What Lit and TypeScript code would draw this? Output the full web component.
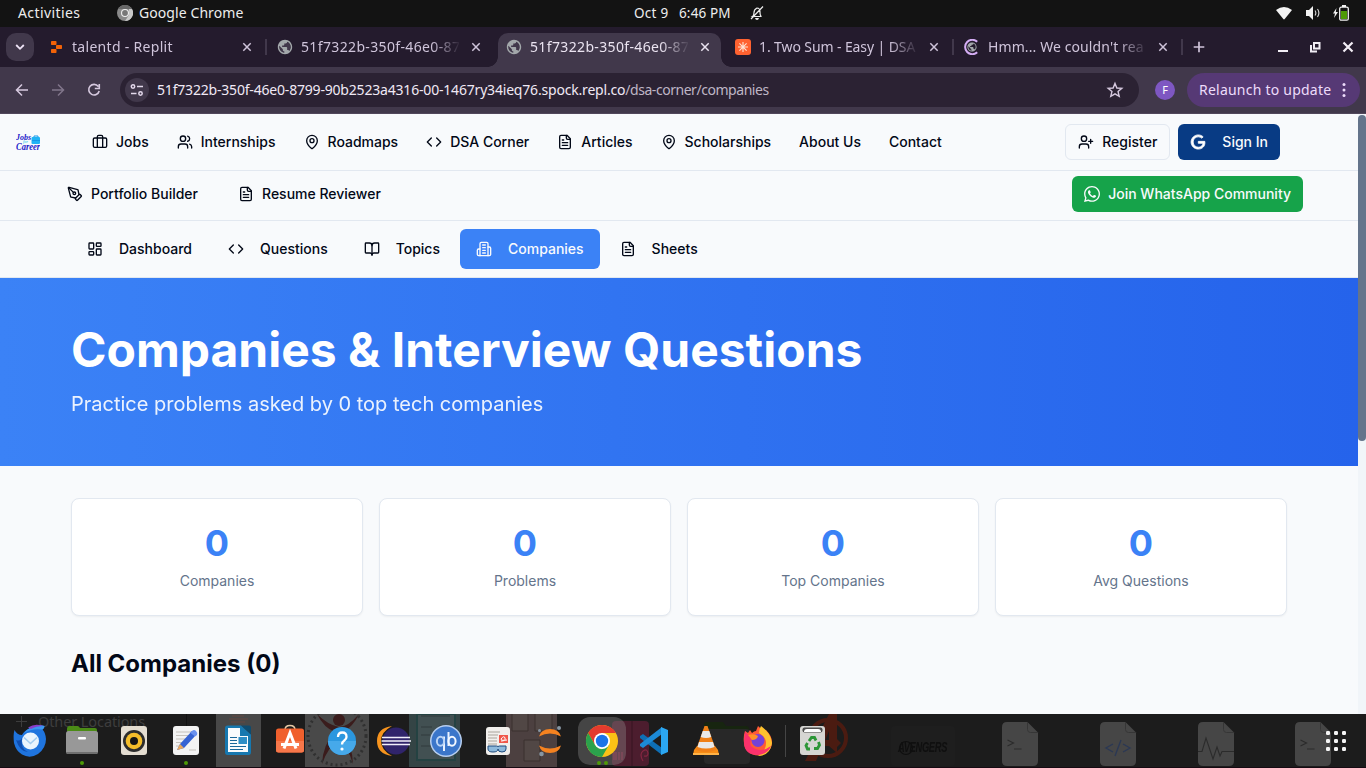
import { LitElement, html, svg, css, TemplateResult, SVGTemplateResult } from "lit";
import { customElement } from "lit/decorators.js";
import { classMap } from "lit/directives/class-map.js";

type Art = SVGTemplateResult;

/* ---------- line icons, 24-unit grid ---------- */
const line: Record<string, Art> = {
  jobs: svg`<path d="M16 20V4a2 2 0 0 0-2-2h-4a2 2 0 0 0-2 2v16"/><rect width="20" height="14" x="2" y="6" rx="2"/>`,
  users: svg`<path d="M16 21v-2a4 4 0 0 0-4-4H6a4 4 0 0 0-4 4v2"/><circle cx="9" cy="7" r="4"/><path d="M22 21v-2a4 4 0 0 0-3-3.87"/><path d="M16 3.13a4 4 0 0 1 0 7.75"/>`,
  pin: svg`<path d="M20 10c0 4.993-5.539 10.193-7.399 11.799a1 1 0 0 1-1.202 0C9.539 20.193 4 14.993 4 10a8 8 0 0 1 16 0"/><circle cx="12" cy="10" r="3"/>`,
  code: svg`<path d="m16 18 6-6-6-6"/><path d="m8 6-6 6 6 6"/>`,
  file: svg`<path d="M15 2H6a2 2 0 0 0-2 2v16a2 2 0 0 0 2 2h12a2 2 0 0 0 2-2V7Z"/><path d="M14 2v4a2 2 0 0 0 2 2h4"/><path d="M10 9H8"/><path d="M16 13H8"/><path d="M16 17H8"/>`,
  pen: svg`<path d="M15.707 21.293a1 1 0 0 1-1.414 0l-1.586-1.586a1 1 0 0 1 0-1.414l5.586-5.586a1 1 0 0 1 1.414 0l1.586 1.586a1 1 0 0 1 0 1.414z"/><path d="m18 13-1.375-6.874a1 1 0 0 0-.746-.776L3.235 2.028a1 1 0 0 0-1.207 1.207L5.35 15.879a1 1 0 0 0 .776.746L13 18"/><path d="m2.3 2.3 7.286 7.286"/><circle cx="11" cy="11" r="2"/>`,
  userPlus: svg`<path d="M16 21v-2a4 4 0 0 0-4-4H6a4 4 0 0 0-4 4v2"/><circle cx="9" cy="7" r="4"/><path d="M19 8v6M22 11h-6"/>`,
  dashboard: svg`<rect width="7" height="9" x="3" y="3" rx="1"/><rect width="7" height="5" x="14" y="3" rx="1"/><rect width="7" height="9" x="14" y="12" rx="1"/><rect width="7" height="5" x="3" y="16" rx="1"/>`,
  book: svg`<path d="M12 7v14"/><path d="M3 18a1 1 0 0 1-1-1V4a1 1 0 0 1 1-1h5a4 4 0 0 1 4 4 4 4 0 0 1 4-4h5a1 1 0 0 1 1 1v13a1 1 0 0 1-1 1h-6a3 3 0 0 0-3 3 3 3 0 0 0-3-3z"/>`,
  building: svg`<path d="M6 22V4a2 2 0 0 1 2-2h8a2 2 0 0 1 2 2v18Z"/><path d="M6 12H4a2 2 0 0 0-2 2v6a2 2 0 0 0 2 2h2"/><path d="M18 9h2a2 2 0 0 1 2 2v9a2 2 0 0 1-2 2h-2"/><path d="M10 6h4M10 10h4M10 14h4M10 18h4"/>`,
};
const icon = (name: string) =>
  html`<svg class="line" width="16" height="16" viewBox="0 0 24 24">${line[name]}</svg>`;

const pic = (w: number, h: number, box: string, art: Art) =>
  html`<svg width=${w} height=${h} viewBox=${box}>${art}</svg>`;

const globePath =
  "M12 2C6.48 2 2 6.48 2 12s4.48 10 10 10 10-4.48 10-10S17.52 2 12 2zm-1 17.93c-3.95-.49-7-3.85-7-7.93 0-.62.08-1.21.21-1.79L9 15v1c0 1.1.9 2 2 2v1.93zm6.9-2.54c-.26-.81-1-1.39-1.9-1.39h-1v-3c0-.55-.45-1-1-1H8v-2h2c.55 0 1-.45 1-1V7h2c1.1 0 2-.9 2-2v-.41c2.93 1.19 5 4.06 5 7.41 0 2.08-.8 3.97-2.1 5.39z";

/* ---------- tab favicons, 16-unit grid ---------- */
const globe = svg`<circle cx="8" cy="8" r="5.5" fill="#41384b"/><path transform="translate(-.64 -.64) scale(.72)" fill="#a3a8ab" d=${globePath}/>`;
const fav: Record<string, Art> = {
  replit: svg`<g fill="#f26207"><rect x="3" y="2" width="5.5" height="4" rx=".7"/><rect x="8" y="6" width="6" height="4" rx=".7"/><rect x="3" y="10" width="5.5" height="4" rx=".7"/></g>`,
  globe,
  burst: svg`<rect width="16" height="16" rx="3" fill="#ff6230"/><path d="M8 3v10M3 8h10M4.4 4.4l7.2 7.2M11.6 4.400l-7.200 7.200" stroke="#ffe3d4" stroke-width="1.1"/>`,
  loading: svg`<path transform="translate(2.480 2.480) scale(.46)" fill="#a3a8ab" d=${globePath}/><path d="M13.2 2.700A7.200 7.200 0 1 0 13.200 13.300" fill="none" stroke="#d5aef5" stroke-width="2"/>`,
};

/* ---------- dock applications, 34-unit grid ---------- */
const dock: { art: Art; dots?: number; on?: boolean }[] = [
  { art: svg`<path d="M1.500 7Q0 12 1 20 3 28 9 31.500 17 36 25 31 33 25 33 16 32.500 9.500 29.500 6.500 31.500 5 31.500 3 24 1 17 5 11 8 9 12 4 12 1.500 7z" fill="#1f74de"/><path d="M31.500 3Q24 1 17 5q-4 2-6 5 8-5 18.500-3.500Q31.500 5 31.500 3z" fill="#3c96f0"/><path d="M15 4.500Q22 0 30 3q-7 0-12 3z" fill="#8a3fca"/><path d="M3 17q5 2 6-3-2 12 6 15-8 0-12-12z" fill="#0f4db0"/><circle cx="17.500" cy="18" r="8.500" fill="#eaf4fd"/><path d="M11 14.500l6.500 6 6.500-6" fill="none" stroke="#a4cdf0" stroke-width="1.600"/>` },
  { dots: 1, art: svg`<path d="M2 6q0-3 2.500-3h8q1.500 0 2.500 2h15q2 0 2 2v7H2z" fill="#4b8b16"/><rect x="1" y="8" width="32" height="23" rx="2.500" fill="#989898"/><path d="M1 29h32q0 2-3 2H4q-3 0-3-2z" fill="#6f6f6f"/><rect x="13" y="14" width="8" height="2.500" rx="1" fill="#fff"/>` },
  { art: svg`<rect x="4" y="3" width="26" height="29" rx="3" fill="#e4ddd1"/><circle cx="17" cy="18" r="11" fill="#2c2c2c"/><circle cx="17" cy="18" r="8.300" fill="#f4bd2a"/><circle cx="17" cy="18" r="4" fill="#161616"/>` },
  { dots: 1, art: svg`<rect x="4" y="3" width="26" height="29" rx="3" fill="#f3f3f3"/><path d="M7 9h17M7 12.500h15M7 16h12M7 19.500h10M7 23h6M20 27h7" stroke="#c5c1bb" stroke-width="1"/><path d="M8 27l3-6L23 8l4 4-12 13z" fill="#3663d3"/><path d="M23 8q2-2 4 0t1 4l-2 1.500-5-4z" fill="#6a91ef"/><path d="M8 27l3-6 4 4z" fill="#eaa85d"/>` },
  { art: svg`<path d="M4 5q0-2.500 2.500-2.500H20l10 9V29q0 3-2.500 3h-21Q4 32 4 29z" fill="#1678b0"/><path d="M7 5h12v8h8v16H7z" fill="#f8fbfd"/><path d="M20 2.500h8q2 0 2 2v7z" fill="#0e4c70"/><path d="M9 14.500h7M9 17.500h7M9 20.500h7M9 23.500h16M9 26.500h13" stroke="#19679a" stroke-width="1.200"/><rect x="17.500" y="14" width="8.500" height="7" fill="#2d8ec6"/>` },
  { art: svg`<path d="M12 7q0-4.500 5-4.500T22 7" fill="none" stroke="#e6c9a6" stroke-width="1.500"/><rect x="3" y="5.500" width="28" height="24" rx="2.500" fill="#f0602d"/><path d="M3 18h28v9q0 2.500-2.500 2.500h-23Q3 29.500 3 27z" fill="#f7774a"/><path d="M11 25.500L17 10l6 15.500M8 21.500h18" fill="none" stroke="#fff" stroke-width="3"/>` },
  { art: svg`<circle cx="17" cy="18" r="14" fill="#2b97df"/><path d="M3 18a14 14 0 0 0 28 0z" fill="#46a9ea"/><path d="M13 14q0-4.500 4.300-4.500T21.500 14q0 2-2.200 3.500T17 21.500" fill="none" stroke="#fff" stroke-width="2.300"/><circle cx="17" cy="26" r="1.600" fill="#fff"/>` },
  { art: svg`<path d="M15 3Q0 5 0 18t15 15Q4 27 4 18T15 3z" fill="#f7941e"/><circle cx="19" cy="18" r="13.500" fill="#30246b"/><path d="M5 14.500h28M4.500 18h29.500M5 21.500h28" stroke="#f1eefa" stroke-width="1.600"/>` },
  { art: svg`<circle cx="17" cy="18" r="16" fill="#b6cef0"/><circle cx="17" cy="18" r="14.500" fill="#3b76ca"/><path d="M15 13.500V28M19.500 9v14" fill="none" stroke="#e9f2ff" stroke-width="2"/><ellipse cx="11.500" cy="18.300" rx="3.600" ry="4.500" fill="none" stroke="#b9d3f5" stroke-width="2"/><ellipse cx="23" cy="18.300" rx="3.600" ry="4.500" fill="none" stroke="#f3f8ff" stroke-width="2"/>` },
  { art: svg`<rect x="5" y="4" width="24" height="28" rx="3" fill="#f1efec"/><path d="M7 9h12M7 12h10M7 15h9M7 18h9M7 21h9" stroke="#a9a49c"/><rect x="18" y="12" width="9" height="8" fill="#f0574a"/><path d="M20 18q5 0 4-3t-4 1q0 2 6 1" fill="none" stroke="#fff"/><path d="M7 23h8.500q1.500 0 1.500 1 0-1 1.500-1H25v3q0 3-4 3t-4-3q0 3-5 3t-5-3z" fill="#8db9dc" stroke="#1e4a7c"/>` },
  { art: svg`<path d="M6 13.500Q8 6 17 6t11 7.500Q17 7.500 6 13.500z M6 22.500Q8 30 17 30t11-7.500Q17 28.500 6 22.500z" fill="#f58220"/><circle cx="26" cy="5" r="2" fill="#8795a2"/><circle cx="6.500" cy="7.500" r="1.500" fill="#8795a2"/><circle cx="8.500" cy="31" r="2.300" fill="#8795a2"/>` },
  { dots: 2, on: true, art: svg`<circle cx="17" cy="18" r="16" fill="#fbc116"/><path d="M3.140 10A16 16 0 0 1 30.860 10H17L10.070 22z" fill="#e33b2e"/><path d="M3.140 10L10.070 22l6 4.500L17 34A16 16 0 0 1 3.140 10z" fill="#2ba24c"/><path d="M17 34L23.930 22 17 26l-3 1z" fill="#2ba24c"/><circle cx="17" cy="18" r="8" fill="#fff"/><circle cx="17" cy="18" r="6.200" fill="#1a73e8"/>` },
  { art: svg`<path d="M3 13l3-2 19 14v7L3 15z" fill="#0e6fb4"/><path d="M3 23l3 2 19-14V4L3 21z" fill="#1c8ad6"/><path d="M24 4l7 3v22l-7 3z" fill="#2ba7f2"/>` },
  { art: svg`<path d="M5 27l3-4h18l3 4 1 5H4z" fill="#f78d16"/><path d="M15.500 3h3L27 27q-10 4-20 0z" fill="#f08017"/><path d="M13.700 8h6.600l2 6q-5.300 2-10.600 0zM10 19h14l1.500 5q-8.500 3-17 0z" fill="#e9e9e9"/><path d="M4 30h26v2H4z" fill="#ffb347"/>` },
  { art: svg`<path d="M4 8l3 2 2-3 2 3q2-2 4-2l2-5q4 3 5 6l3-2q6 6 6 12A14 13 0 0 1 3 20q-1-6 1-12z" fill="#ff5a36"/><path d="M20 3q10 7 11 17-2 13-14 13 8-5 8-13 0-6-7-10 0-4 2-7z" fill="#ffc22e"/><path d="M3 19q0 13 14 13 10-1 13-9-11 8-20 0-2-5 2-9Q6 12 4 8z" fill="#fb316c"/><circle cx="17" cy="17.500" r="6.500" fill="#7542d8"/><path d="M7 12q6-2 10 1-1 4-6 4z" fill="#ff9227"/>` },
];
const trash = svg`<rect x="4" y="3" width="25" height="29" rx="3" fill="#d6d6d3"/><rect x="6.500" y="4.500" width="20" height="5" rx="2" fill="#4d4d4d"/><path d="M8 9q0-3 3-3h11q3 0 3 3z" fill="#fff"/><g fill="none" stroke="#2d9637" stroke-width="2.800"><path d="M13 18l2.500-3.500h3l1.500 3"/><path d="M22.500 19l1 3-2 3.500H18"/><path d="M14 26h-2.500L10 22.500l1.500-2.500"/></g>`;

/* ---------- desktop content showing through the dock ---------- */
const sheet = (x: number, mark: Art) =>
  svg`<g transform="translate(${x} 8)"><path d="M5 0H25.500L36 10.500V39q0 5-5 5H5q-5 0-5-5V5q0-5 5-5z" fill="#464646"/><path d="M25.500 0V7.500q0 3 3 3H36" fill="none" stroke="#363636"/>${mark}</g>`;
const prompt = svg`<path d="M5.500 18l6 3-6 3M12 27h7.500" fill="none" stroke="#2b2b2b" stroke-width="1.200"/>`;
const ghosts = svg`
  <path d="M16 7.500h11M21.500 2v11" stroke="#3d3d3d"/>
  <path d="M186.500 0v12" stroke="#111"/>
  <rect x="216" width="45" height="53" fill="#484848"/><path d="M232 2h12M229 5h19M231 8h14" stroke="#654741"/>
  <rect x="305" width="64" height="53" fill="#494949"/><path d="M317 0q7 14 18 18-12 12-13 32 6-17 17-25 9 8 14 25-1-20-10-32Q353 13 359 0 348 13 339 13 328 11 317 0z" fill="#3a1c1c"/><circle cx="339" cy="6" r="6" fill="#3a1c1c"/><circle cx="337" cy="22" r="29" fill="none" stroke="#303030" stroke-width="3" stroke-dasharray="2 3"/>
  <rect x="409" width="51" height="53" fill="#344445"/><rect x="417" width="38" height="46" fill="#425052" stroke="#244242" stroke-width="2"/><path d="M421 2h29M421 13h11M421 21h9M421 32h12M439 12h12" stroke="#303a3c"/>
  <rect x="506" width="51" height="53" fill="#4c4040"/><path d="M512-1h16v18h-16zM535-1h17v18h-17zM524 26h16v21h-16z" fill="#514745" stroke="#3b302f"/>
  <rect x="612" y="7" width="37" height="45" rx="4" fill="#4c1d2e"/><path d="M632 7v45" stroke="#361421"/><path d="M643 47q-4-7 0-10t5 2q0 4-4 3M614 38v8M616 38v8M619 38v8M622 38v8" fill="none" stroke="#842641" stroke-width="1.200"/>
  <path d="M704 18V11q0-3 3-3h16l3 4h20q3 0 3 3v4z" fill="#172510"/><rect x="704" y="15" width="46" height="35" rx="4" fill="#282828"/>
  <circle cx="828" cy="24" r="18" fill="none" stroke="#4b1b11" stroke-width="4"/><path d="M805 47l24-47h8v39l-8-7V17l-13 30zM817 26h17v-4l7 7-7 7v-4h-18z" fill="#4b1b11"/>
  <rect x="891" y="12" width="64" height="40" rx="4" fill="#1e1e1e"/>
  <circle cx="906" cy="34" r="6.500" fill="none" stroke="#0f0f0f" stroke-width="1.200"/>
  ${sheet(1002, prompt)}
  ${sheet(1100, svg`<path d="M13 22l-7 4 7 4M23 22l7 4-7 4M21 18l-6 16" fill="none" stroke="#2b3854" stroke-width="1.400"/>`)}
  ${sheet(1198, svg`<path d="M0 29.500h4L8 16l7 21 4-12 3 9 2-4.500h12" fill="none" stroke="#2b2b2b" stroke-width="1.100"/>`)}
  ${sheet(1295, prompt)}`;

@customElement("app-root")
export class AppRoot extends LitElement {
  static styles = css`
    :host { display: flex; flex-direction: column; width: 1366px; height: 768px; overflow: hidden; font-family: "Noto Sans", "Open Sans", sans-serif; font-size: 14px; color: #ededed; }
    * { box-sizing: border-box; }
    svg { display: block; flex: none; }
    .line { fill: none; stroke: currentColor; stroke-width: 2; stroke-linecap: round; stroke-linejoin: round; }
    .grow { flex: 1; }

    .topbar { display: grid; grid-template-columns: 634px 1fr auto; align-items: center; height: 27px; padding-bottom: 1px; flex: none; background: #131313; white-space: nowrap; line-height: 20px; }
    .left, .clock, .status, .strip, .tab, .tools, .omni, .relaunch, .winbtns { display: flex; align-items: center; }
    .left { padding-left: 18px; }
    .activities { width: 99px; letter-spacing: .4px; }
    .app { margin-left: 6px; letter-spacing: .08px; }
    .clock { font-size: 13.5px; }
    .date { width: 45px; letter-spacing: .3px; }
    .time { width: 70px; letter-spacing: .15px; }
    .status { gap: 12px; padding-right: 17px; }

    .strip { height: 40px; flex: none; background: #241b2d; padding-left: 6px; }
    .list { width: 28px; height: 28px; border-radius: 10px; background: #41384b; display: grid; place-items: center; margin-right: 6px; }
    .tab { position: relative; width: 229px; height: 40px; padding-left: 8px; color: #cfc4da; }
    .tab.active { z-index: 1; color: #eae3f0; }
    .tab.active::before { content: ""; position: absolute; z-index: -1; left: 0; right: 6px; top: 6px; bottom: 0; border-radius: 10px 10px 0 0; background: #41384b; }
    .tab.active::after { content: ""; position: absolute; z-index: -1; left: -10px; right: -4px; bottom: 0; height: 10px; background: radial-gradient(circle at 0 0, transparent 9.5px, #41384b 10px) left / 10px 10px no-repeat, radial-gradient(circle at 100% 0, transparent 9.5px, #41384b 10px) right / 10px 10px no-repeat; }
    .title { width: 158px; margin-left: 8px; overflow: hidden; white-space: nowrap; line-height: 22px; -webkit-mask-image: linear-gradient(90deg, #000 130px, transparent 160px); mask-image: linear-gradient(90deg, #000 130px, transparent 160px); }
    .t-replit { letter-spacing: .3px; }
    .t-globe { letter-spacing: .36px; }
    .t-burst { letter-spacing: -.1px; }
    .t-loading { letter-spacing: .1px; }
    .x { margin-left: 12px; }
    .sep { width: 2px; height: 16px; background: #41384b; margin-left: 13px; }
    .tab.nosep .sep { visibility: hidden; }
    .winbtns { gap: 17px; padding-right: 10px; }

    .tools { height: 47px; flex: none; background: #41384b; padding: 0 6px 1px 14px; border-bottom: 1px solid #51475b; color: #e4d9ec; }
    .tools > .nav { margin-right: 20px; }
    .omni { width: 1019px; height: 34px; border-radius: 17px; background: #2b2233; padding: 0 15px 0 5px; margin-left: -2px; }
    .site { width: 24px; height: 24px; border-radius: 12px; background: #41384b; display: grid; place-items: center; margin-right: 8px; }
    .url { white-space: nowrap; letter-spacing: -.19px; color: #f0e9f5; line-height: 22px; }
    .path { color: #bfb6c6; letter-spacing: -.46px; }
    .avatar { width: 20px; height: 20px; border-radius: 50%; background: #7e57c2; color: #fff; font-size: 11px; line-height: 20px; text-align: center; margin: 0 12px 0 16px; }
    .relaunch { width: 173px; height: 34px; border-radius: 17px; background: #563975; padding: 0 14px 0 12px; white-space: nowrap; color: #eddcfb; letter-spacing: .23px; }

    .page { position: relative; height: 600px; flex: none; background: #f8fafc; color: #020817; font: 500 14px/20px Inter, sans-serif; padding-right: 8px; overflow: hidden; }
    .thumb { position: absolute; right: 0; top: 0; width: 8px; height: 600px; background: #f1f5f9; }
    .thumb::before { content: ""; display: block; height: 326px; margin-top: 1px; border-radius: 4px; background: #64748b; }
    .row { display: flex; align-items: center; border-bottom: 1px solid #e2e8f0; white-space: nowrap; }
    .main { height: 57px; padding: 0 78px 0 16px; }
    .links { display: flex; gap: 28px; margin-left: 52px; flex: 1; }
    .link { display: flex; align-items: center; gap: 8px; }
    .logo { width: 24px; height: 18px; }
    .btn { display: flex; align-items: center; height: 36px; border-radius: 6px; padding: 0 12px; gap: 8px; }
    .outline { border: 1px solid #e2e8f0; margin-right: 8px; }
    .signin { background: #083b84; color: #f8fafc; gap: 16px; }
    .second { height: 50px; padding: 0 55px 3px 67px; }
    .second .links { margin-left: 0; gap: 40px; }
    .wa { background: #16a34a; color: #f8fafc; }
    .sub { height: 57px; padding-left: 71px; gap: 4px; }
    .item { display: flex; align-items: center; gap: 16px; height: 40px; padding: 0 16px; border-radius: 6px; }
    .item.on { background: #3b82f6; color: #f8fafc; }
    .hero { height: 188px; padding: 48px 71px; background: linear-gradient(90deg, #3b82f6, #2563eb); color: #fff; }
    h1 { margin: 0 0 16px; font-size: 48px; line-height: 48px; font-weight: 700; }
    .lead { font-size: 20px; line-height: 28px; font-weight: 400; opacity: .9; }
    .body { padding: 32px 71px; }
    .cards { display: grid; grid-template-columns: repeat(4, 1fr); gap: 16px; }
    .card { height: 118px; border: 1px solid #e2e8f0; border-radius: 8px; background: #fff; padding: 24px; text-align: center; box-shadow: 0 1px 2px rgba(0,0,0,.05); }
    .num { font-size: 36px; line-height: 40px; font-weight: 700; color: #3b82f6; margin-bottom: 8px; }
    .cap { font-weight: 400; color: #64748b; }
    h2 { margin: 32px 0 0; font-size: 24px; line-height: 32px; font-weight: 700; }

    .dock { position: relative; height: 54px; flex: none; display: flex; align-items: center; background: #1c1c1c; border-bottom: 1px solid #160a12; padding-left: 4px; }
    .behind { position: absolute; left: 0; top: 0; }
    .other { position: absolute; left: 38px; top: -3px; font-size: 14.5px; line-height: 20px; color: #3e3e3e; white-space: nowrap; letter-spacing: -.1px; }
    .hero-name { position: absolute; left: 898px; top: 25px; font: italic 700 15px/16px "Liberation Sans", sans-serif; letter-spacing: -.5px; color: #0f0f0f; transform: scaleX(.62); transform-origin: 0 0; }
    .launch { position: relative; width: 52px; height: 54px; padding-top: 1px; display: grid; place-items: center; }
    .launch.on::before { content: ""; position: absolute; left: 2px; top: 3px; width: 48px; height: 48px; border-radius: 12px; background: rgba(150,150,150,.34); }
    .launch svg { position: relative; }
    .dots { position: absolute; left: 0; right: 0; top: 47px; display: flex; justify-content: center; gap: 3px; }
    .dot { width: 4px; height: 4px; border-radius: 2px; background: #4e9a06; }
    .rule { width: 1px; height: 32px; background: #454545; margin: 0 1px; }
    .apps { position: relative; margin-right: 20px; }
  `;

  private tab(f: string, title: string, cls: Record<string, boolean> = {}): TemplateResult {
    return html`<div class=${classMap({ tab: true, ...cls })}>
      ${pic(16, 16, "0 0 16 16", fav[f])}
      <span class=${"title t-" + f}>${title}</span>
      <svg class="x" width="10" height="10" viewBox="0 0 10 10"><path d="M1.300 1.300l7.400 7.400M8.700 1.300L1.300 8.700" stroke="currentColor" stroke-width="1.500"/></svg>
      <span class="sep"></span>
    </div>`;
  }

  private link(name: string, label: string) {
    return html`<span class="link">${name ? icon(name) : ""}<span>${label}</span></span>`;
  }

  render() {
    const id = "51f7322b-350f-46e0-8799-90b2523a4316";
    const short = id.slice(0, 21);
    return html`
      <div class="topbar">
        <div class="left">
          <span class="activities">Activities</span>
          ${pic(16, 16, "0 0 16 16", svg`<circle cx="8" cy="8" r="8" fill="#8a8a8a"/><path d="M1 4A8 8 0 0 1 15 4H8z" fill="#686868"/><path d="M15 4A8 8 0 0 1 8 16l4-6V4z" fill="#c9c9c9"/><circle cx="8" cy="8" r="4" fill="#eee"/><circle cx="8" cy="8" r="2.900" fill="#777"/>`)}
          <span class="app">Google Chrome</span>
        </div>
        <div class="clock">
          <span class="date">Oct 9</span><span class="time">6:46 PM</span>
          ${pic(16, 16, "0 0 16 16", svg`<path d="M3.500 11.500q1.500-1 1.500-4T8 3q3 0 3 4t1.500 4.500zM2 14L14 1.500" fill="none" stroke="#eee" stroke-width="1.200"/><path d="M6 13h4q-.5 2-2 2t-2-2z" fill="#eee"/>`)}
        </div>
        <div class="status">
          ${pic(16, 16, "0 0 16 16", svg`<path d="M0 5Q8-1 16 5L8.700 14q-.7.800-1.400 0z" fill="#f2f2f2"/>`)}
          ${pic(16, 16, "0 0 16 16", svg`<path d="M2 5h3l4-4v14l-4-4H2z" fill="#f2f2f2"/><path d="M11 5.500q1.700 2.500 0 5M13.500 4q2.800 4 0 8" fill="none" stroke="#ddd" stroke-width="1.100"/>`)}
          ${pic(17, 16, "0 0 17 16", svg`<path d="M4.500 3L1 8.500h2L2 13l4-6H3.800z" fill="#f2f2f2"/><rect x="7.700" y="2.200" width="8.600" height="13" rx="1.500" fill="none" stroke="#f2f2f2" stroke-width="1.300"/><rect x="10" y="0" width="4" height="2" fill="#f2f2f2"/><rect x="9" y="6" width="6" height="8" fill="#4e9a06"/>`)}
        </div>
      </div>

      <div class="strip">
        <div class="list">${pic(10, 8, "0 0 10 8", svg`<path d="M1.200 2L5 5.800 8.800 2" fill="none" stroke="#eee3f6" stroke-width="1.800"/>`)}</div>
        ${this.tab("replit", "talentd - Replit")}
        ${this.tab("globe", short, { nosep: true })}
        ${this.tab("globe", short, { active: true, nosep: true })}
        ${this.tab("burst", "1. Two Sum - Easy | DSA")}
        ${this.tab("loading", "Hmm... We couldn't rea")}
        ${pic(28, 12, "0 0 28 12", svg`<path d="M14 .7v10.600M8.700 6h10.600" stroke="#cfc4da" stroke-width="1.700"/>`)}
        <span class="grow"></span>
        <div class="winbtns">
          ${pic(16, 16, "0 0 16 16", svg`<rect x="4" y="11" width="10" height="2" fill="#f2eef5"/>`)}
          ${pic(16, 16, "0 0 16 16", svg`<path d="M7 4h5.500v5.500H7z M4 6v6.500h6" fill="none" stroke="#f2eef5" stroke-width="2"/>`)}
          ${pic(16, 16, "0 0 16 16", svg`<path d="M3.500 3.500l9 9M12.500 3.500l-9 9" stroke="#f2eef5" stroke-width="2.200"/>`)}
        </div>
      </div>

      <div class="tools">
        <svg class="nav" width="16" height="16" viewBox="0 0 16 16"><path d="M8 2.500L2.500 8 8 13.500M2.500 8H14" fill="none" stroke="#d6c9df" stroke-width="1.500"/></svg>
        <svg class="nav" width="16" height="16" viewBox="0 0 16 16"><path d="M8 2.500L13.500 8 8 13.500M13.500 8H2" fill="none" stroke="#80758a" stroke-width="1.500"/></svg>
        <svg class="nav" width="16" height="16" viewBox="0 0 16 16"><path d="M12.300 4.500A5.300 5.300 0 1 0 13.200 9M13.300 2v4.500H8.800" fill="none" stroke="#d6c9df" stroke-width="1.600"/></svg>
        <div class="omni">
          <div class="site">${pic(14, 14, "0 0 14 14", svg`<g fill="none" stroke="#e4d9ec" stroke-width="1.500"><circle cx="3" cy="3.500" r="1.700"/><path d="M7 3.500h6M1 10.500h5.500"/><circle cx="10.500" cy="10.500" r="1.700"/></g>`)}</div>
          <span class="url">${id}-00-1467ry34ieq76.spock.repl.co<span class="path">/dsa-corner/companies</span></span>
          <span class="grow"></span>
          ${pic(18, 18, "0 0 24 24", svg`<path d="M12 3.200l2.500 6.100 6.600.500-5 4.300 1.500 6.400L12 17.100l-5.600 3.400L7.900 14.100l-5-4.300 6.600-.5z" fill="none" stroke="#d6c9df" stroke-width="1.900"/>`)}
        </div>
        <div class="avatar">F</div>
        <div class="relaunch"><span>Relaunch to update</span><span class="grow"></span>
          ${pic(4, 16, "0 0 4 16", svg`<circle cx="2" cy="2.500" r="1.500" fill="#eddcfb"/><circle cx="2" cy="8" r="1.500" fill="#eddcfb"/><circle cx="2" cy="13.500" r="1.500" fill="#eddcfb"/>`)}
        </div>
      </div>

      <main class="page">
        <div class="row main">
          <svg class="logo" viewBox="0 0 24 18"><rect x="15.500" y="4" width="8.500" height="7" rx="1" fill="#20b3f5"/><path d="M18 4V3h4v1M16 7.500h8" fill="none" stroke="#1697e8"/><g font-family="Liberation Serif, serif" font-style="italic" font-weight="700" fill="#1818c8"><text x="0" y="7" font-size="8.500" textLength="15" lengthAdjust="spacingAndGlyphs">Jobs</text><text x="7" y="10" font-size="4" fill="#4fd0ee">for</text><text x="0" y="16.500" font-size="9.500" textLength="24" lengthAdjust="spacingAndGlyphs">Career</text></g></svg>
          <nav class="links">
            ${this.link("jobs", "Jobs")}${this.link("users", "Internships")}${this.link("pin", "Roadmaps")}${this.link("code", "DSA Corner")}${this.link("file", "Articles")}${this.link("pin", "Scholarships")}${this.link("", "About Us")}${this.link("", "Contact")}
          </nav>
          <div class="btn outline">${icon("userPlus")}<span>Register</span></div>
          <div class="btn signin">${pic(16, 16, "-1.5 -1.5 27 27", svg`<path fill="#fff" stroke="#fff" stroke-width="1.300" d="M12.480 10.920v3.280h7.840c-.24 1.840-.853 3.187-1.787 4.133-1.147 1.147-2.933 2.400-6.053 2.400-4.827 0-8.600-3.893-8.600-8.720s3.773-8.720 8.600-8.720c2.600 0 4.507 1.027 5.907 2.347l2.307-2.307C18.747 1.440 16.133 0 12.480 0 5.867 0 .307 5.387.307 12s5.560 12 12.173 12c3.573 0 6.267-1.173 8.373-3.360 2.160-2.160 2.840-5.213 2.840-7.667 0-.76-.053-1.467-.173-2.053H12.480z"/>`)}<span>Sign In</span></div>
        </div>
        <div class="row second">
          <div class="links">${this.link("pen", "Portfolio Builder")}${this.link("file", "Resume Reviewer")}</div>
          <div class="btn wa">${pic(16, 16, "0 32 448 448", svg`<path fill="currentColor" d="M380.9 97.1C339 55.100 283.200 32 223.900 32c-122.400 0-222 99.600-222 222 0 39.100 10.200 77.300 29.600 111L0 480l117.700-30.900c32.400 17.700 68.900 27 106.100 27h.1c122.300 0 224.100-99.600 224.100-222 0-59.300-25.200-115-67.100-157zm-157 341.600c-33.200 0-65.700-8.900-94-25.700l-6.700-4-69.800 18.300L72 359.200l-4.400-7c-18.500-29.400-28.200-63.300-28.200-98.200 0-101.700 82.800-184.500 184.600-184.500 49.300 0 95.600 19.200 130.400 54.100 34.800 34.900 56.200 81.200 56.100 130.500 0 101.800-84.900 184.600-186.600 184.600zm101.200-138.200c-5.500-2.800-32.800-16.200-37.900-18-5.100-1.900-8.800-2.800-12.500 2.800-3.700 5.600-14.300 18-17.600 21.800-3.200 3.700-6.500 4.200-12 1.400-32.600-16.300-54-29.100-75.500-66-5.700-9.800 5.700-9.100 16.300-30.300 1.800-3.700.9-6.900-.5-9.700-1.400-2.800-12.500-30.100-17.100-41.200-4.500-10.800-9.100-9.300-12.500-9.500-3.200-.2-6.900-.2-10.600-.2-3.700 0-9.700 1.400-14.800 6.900-5.100 5.600-19.400 19-19.400 46.300 0 27.300 19.900 53.700 22.600 57.400 2.800 3.700 39.100 59.700 94.800 83.800 35.200 15.200 49 16.500 66.600 13.900 10.700-1.600 32.800-13.400 37.400-26.400 4.600-13 4.600-24.100 3.200-26.400-1.300-2.500-5-3.900-10.500-6.600z"/>`)}<span>Join WhatsApp Community</span></div>
        </div>
        <div class="row sub">
          ${[["dashboard", "Dashboard"], ["code", "Questions"], ["book", "Topics"], ["building", "Companies"], ["file", "Sheets"]].map(
            ([i, t]) => html`<div class=${classMap({ item: true, on: t === "Companies" })}>${icon(i)}<span>${t}</span></div>`
          )}
        </div>
        <section class="hero">
          <h1>Companies &amp; Interview Questions</h1>
          <div class="lead">Practice problems asked by 0 top tech companies</div>
        </section>
        <section class="body">
          <div class="cards">
            ${["Companies", "Problems", "Top Companies", "Avg Questions"].map(
              (c) => html`<div class="card"><div class="num">0</div><div class="cap">${c}</div></div>`
            )}
          </div>
          <h2>All Companies (0)</h2>
        </section>
        <div class="thumb"></div>
      </main>

      <div class="dock">
        <svg class="behind" width="1366" height="53" viewBox="0 0 1366 53">${ghosts}</svg>
        <span class="other">Other Locations</span>
        <span class="hero-name">AVENGERS</span>
        ${dock.map(
          (d) => html`<div class=${classMap({ launch: true, on: !!d.on })}>
            ${pic(34, 36, "0 0 34 36", d.art)}
            <div class="dots">${Array.from({ length: d.dots ?? 0 }, () => html`<span class="dot"></span>`)}</div>
          </div>`
        )}
        <span class="rule"></span>
        <div class="launch">${pic(34, 36, "0 0 34 36", trash)}</div>
        <span class="grow"></span>
        <svg class="apps" width="20" height="20" viewBox="0 0 20 20">${[0, 8, 16].map((y) => [0, 8, 16].map((x) => svg`<rect x=${x} y=${y} width="4" height="4" rx="1.200" fill="#f5f5f5"/>`))}</svg>
      </div>
    `;
  }
}
